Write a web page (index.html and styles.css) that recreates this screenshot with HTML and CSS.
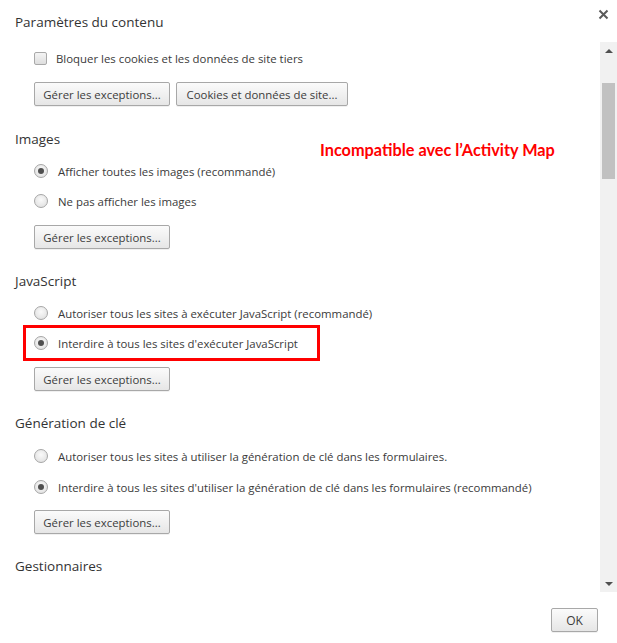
FILE: index.html
```html
<!DOCTYPE html>
<html lang="fr">
<head>
<meta charset="utf-8">
<title>Paramètres du contenu</title>
<link rel="stylesheet" href="styles.css">
</head>
<body>
<div class="dialog">
  <div class="header">
    <h1 class="title">Paramètres du contenu</h1>
    <span class="close" aria-label="Fermer">
      <svg width="11" height="11" viewBox="0 0 11 11"><path d="M1.5 1.5 L9.5 9.5 M9.5 1.5 L1.5 9.5" stroke="#5a5a5a" stroke-width="2" fill="none"/></svg>
    </span>
  </div>
  <div class="main">
    <div class="content">
      <div class="option first">
        <span class="checkbox"></span>
        <span class="label">Bloquer les cookies et les données de site tiers</span>
      </div>
      <div class="btn-row">
        <button class="btn w1">Gérer les exceptions...</button>
        <button class="btn w2">Cookies et données de site...</button>
      </div>

      <section class="section s-first">
        <h2 class="heading">Images</h2>
        <div class="options">
          <div class="option"><span class="radio checked"></span><span class="label">Afficher toutes les images (recommandé)</span></div>
          <div class="option"><span class="radio"></span><span class="label">Ne pas afficher les images</span></div>
        </div>
        <div class="btn-row"><button class="btn w1">Gérer les exceptions...</button></div>
      </section>

      <section class="section">
        <h2 class="heading">JavaScript</h2>
        <div class="options">
          <div class="option"><span class="radio"></span><span class="label">Autoriser tous les sites à exécuter JavaScript (recommandé)</span></div>
          <div class="option marked"><span class="radio checked"></span><span class="label">Interdire à tous les sites d'exécuter JavaScript</span><span class="redbox"></span></div>
        </div>
        <div class="btn-row"><button class="btn w1">Gérer les exceptions...</button></div>
      </section>

      <section class="section">
        <h2 class="heading">Génération de clé</h2>
        <div class="options wide">
          <div class="option"><span class="radio"></span><span class="label">Autoriser tous les sites à utiliser la génération de clé dans les formulaires.</span></div>
          <div class="option"><span class="radio checked"></span><span class="label">Interdire à tous les sites d'utiliser la génération de clé dans les formulaires (recommandé)</span></div>
        </div>
        <div class="btn-row"><button class="btn w1">Gérer les exceptions...</button></div>
      </section>

      <section class="section">
        <h2 class="heading">Gestionnaires</h2>
      </section>
    </div>
    <div class="scrollbar">
      <span class="arrow up"></span>
      <span class="thumb"></span>
      <span class="track-rest"></span>
      <span class="arrow down"></span>
    </div>
  </div>
  <div class="footer">
    <button class="btn ok">OK</button>
  </div>
  <div class="annotation">Incompatible avec l’Activity Map</div>
</div>
</body>
</html>
```

FILE: styles.css
```css
* { box-sizing: border-box; }
html, body { margin: 0; padding: 0; background: #fff; }
body {
  font-family: "Open Sans", "Noto Sans", "DejaVu Sans", sans-serif;
  color: #333;
}
.dialog {
  position: relative;
  width: 617px;
  height: 643px;
  overflow: hidden;
  display: flex;
  flex-direction: column;
}
.header {
  height: 42px;
  display: flex;
  align-items: flex-start;
  justify-content: space-between;
  padding: 0 8px 0 15px;
}
.title {
  margin: 12px 0 0;
  font-size: 13.5px;
  font-weight: 400;
  line-height: 20px;
  color: #333;
}
.close {
  margin-top: 9px;
  width: 11px;
  height: 11px;
  display: flex;
}
.main {
  height: 550px;
  display: flex;
}
.content {
  flex: 1;
  overflow: hidden;
  padding: 6px 0 0 15px;
}
.option {
  position: relative;
  height: 20px;
  display: flex;
  align-items: center;
  margin-left: 19px;
  font-size: 11.4px;
  color: #3a3a3a;
  white-space: nowrap;
}
.options { margin-top: 12px; display: flex; flex-direction: column; gap: 10px; }
.options.wide { margin-top: 13px; gap: 11px; }
.options.wide + .btn-row { margin-top: 13px; }
.checkbox {
  width: 13px;
  height: 13px;
  border: 1px solid #a9a9a9;
  border-radius: 2px;
  background: linear-gradient(#f4f4f4, #dedede);
  margin-right: 9px;
  flex: none;
}
.radio {
  position: relative;
  width: 14px;
  height: 14px;
  border: 1px solid #a6a6a6;
  border-radius: 50%;
  background: radial-gradient(circle at 50% 40%, #fafafa, #dcdcdc);
  margin-right: 10px;
  flex: none;
}
.radio.checked::after {
  content: "";
  position: absolute;
  left: 3px;
  top: 3px;
  width: 6px;
  height: 6px;
  border-radius: 50%;
  background: #4f4f4f;
}
.btn-row {
  margin: 14px 0 0 19px;
  display: flex;
  gap: 6px;
}
.btn {
  height: 24px;
  padding: 0;
  border: 1px solid #a8a8a8;
  border-radius: 2px;
  background: linear-gradient(#fbfbfb, #e6e6e6);
  font-family: inherit;
  font-size: 11.4px;
  color: #3c3c3c;
  box-shadow: 0 1px 0 rgba(0,0,0,0.06);
}
.w1 { width: 136px; }
.w2 { width: 172px; }
.section { margin-top: 22px; }
.s-first { margin-top: 23px; }
.heading {
  margin: 0;
  height: 20px;
  line-height: 20px;
  font-size: 13.5px;
  font-weight: 400;
  color: #333;
}
.redbox {
  position: absolute;
  left: -11px;
  top: -8px;
  width: 297px;
  height: 36px;
  border: 3px solid #f00;
  pointer-events: none;
}
.scrollbar {
  width: 17px;
  background: #f1f1f1;
  display: flex;
  flex-direction: column;
  align-items: center;
}
.arrow {
  height: 17px;
  width: 17px;
  display: flex;
  align-items: center;
  justify-content: center;
  flex: none;
}
.arrow.up::before {
  content: "";
  border-left: 4px solid transparent;
  border-right: 4px solid transparent;
  border-bottom: 4px solid #505050;
}
.arrow.down::before {
  content: "";
  border-left: 4px solid transparent;
  border-right: 4px solid transparent;
  border-top: 4px solid #505050;
}
.thumb {
  margin-top: 24px;
  width: 13px;
  height: 96px;
  background: #c1c1c1;
  flex: none;
}
.track-rest { flex: 1; }
.footer {
  flex: 1;
  display: flex;
  justify-content: flex-end;
  align-items: flex-start;
  padding: 16px 19px 0 0;
}
.ok { width: 47px; height: 24px; font-size: 12px; }
.annotation {
  position: absolute;
  left: 320px;
  top: 139px;
  font-family: "Lato", "Open Sans", sans-serif;
  font-weight: 700;
  font-size: 16.3px;
  line-height: 22px;
  color: #f00;
  white-space: nowrap;
}
```
